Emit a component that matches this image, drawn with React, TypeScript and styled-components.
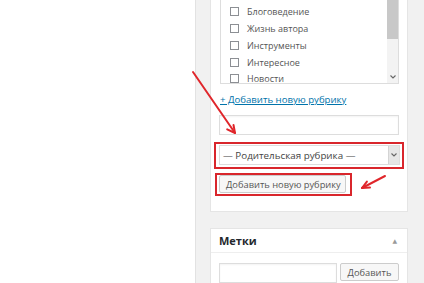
import styled, { createGlobalStyle } from 'styled-components';

const GlobalStyle = createGlobalStyle`
	html, body {
		margin: 0;
		padding: 0;
	}
	body {
		font-family: 'Open Sans', 'DejaVu Sans', sans-serif;
		color: #444;
	}
`;

const StyledPage = styled.div`
	position: relative;
	display: flex;
	width: 100vw;
	height: 100vh;
	overflow: hidden;
	background: #f1f1f1;
`;

const StyledEditor = styled.div`
	width: 195px;
	flex-shrink: 0;
	background: #fff;
	border-right: 1px solid #e2e2e2;
`;

const StyledSidebar = styled.div`
	flex: 1;
	display: flex;
	flex-direction: column;
	gap: 16px;
	padding: 0 17px 0 14px;
`;

const StyledPanel = styled.div<{ $cut?: boolean }>`
	background: #fff;
	border: 1px solid #e5e5e5;
	border-top-width: ${(p) => (p.$cut ? 0 : 1)}px;
`;

const StyledPanelBody = styled.div`
	display: flex;
	flex-direction: column;
	padding: 0 8px 15px 9px;
`;

const StyledListBox = styled.div`
	display: flex;
	height: 83px;
	border: 1px solid #ddd;
	border-top: 0;
	overflow: hidden;
`;

const StyledList = styled.ul`
	flex: 1;
	margin: 0;
	padding: 3.6px 0 0 9px;
	list-style: none;
`;

const StyledItem = styled.li`
	display: flex;
	align-items: center;
	gap: 8px;
	height: 16.75px;
	font-size: 9px;
	color: #555;
`;

const StyledCheck = styled.span`
	width: 7px;
	height: 7px;
	border: 1px solid #8c8f94;
	background: #fff;
`;

const StyledScrollbar = styled.div`
	width: 11px;
	display: flex;
	flex-direction: column;
	background: #f3f3f3;
`;

const StyledThumb = styled.div`
	height: 39px;
	background: #c8c8c8;
`;

const StyledScrollArrow = styled.div`
	margin-top: auto;
	height: 12px;
	display: flex;
	align-items: center;
	justify-content: center;
`;

const StyledLink = styled.a`
	margin-top: 9px;
	font-size: 9.6px;
	line-height: 14px;
	color: #0073aa;
	text-decoration: underline;
`;

const StyledInput = styled.div<{ $width?: number }>`
	height: 18px;
	width: ${(p) => (p.$width ? `${p.$width}px` : 'auto')};
	margin-left: -1px;
	border: 1px solid #ddd;
	background: #fff;
	box-shadow: inset 0 1px 2px rgba(0, 0, 0, 0.05);
`;

const StyledHighlight = styled.div<{ $inline?: boolean }>`
	display: flex;
	align-self: ${(p) => (p.$inline ? 'flex-start' : 'stretch')};
	border: 2px solid #d9262c;
`;

const StyledSelectWrap = styled(StyledHighlight)`
	margin: 7px -5px 0 -6px;
	padding: 1px 2px 2px 3px;
`;

const StyledButtonWrap = styled(StyledHighlight)`
	margin: 4px 0 0 -5px;
	padding: 0 4px 1px 2px;
`;

const StyledSelect = styled.div`
	flex: 1;
	height: 18px;
	display: flex;
	align-items: center;
	border: 1px solid #ddd;
	background: #fff;
	font-size: 9.8px;
	color: #444;
`;

const StyledSelectText = styled.span`
	flex: 1;
	padding-left: 3px;
`;

const StyledSelectArrow = styled.span`
	width: 10px;
	height: 100%;
	display: flex;
	align-items: center;
	justify-content: center;
	background: #e6e6e6;
	border-left: 1px solid #d4d4d4;
`;

const StyledButton = styled.button<{ $width?: number }>`
	height: 18px;
	width: ${(p) => (p.$width ? `${p.$width}px` : 'auto')};
	padding: 0 6px;
	border: 1px solid #ccc;
	border-radius: 2px;
	background: #f7f7f7;
	font-family: inherit;
	font-size: 9.3px;
	color: #555;
	white-space: nowrap;
`;

const StyledPanelHeader = styled.div`
	display: flex;
	align-items: center;
	justify-content: space-between;
	height: 23px;
	padding: 0 10px 0 8px;
	border-bottom: 1px solid #eee;
	font-size: 11px;
	font-weight: 700;
	color: #23282d;
`;

const StyledToggle = styled.span`
	font-size: 6px;
	color: #999;
`;

const StyledTagRow = styled.div`
	display: flex;
	gap: 3px;
	padding: 10px 8px 0 9px;
`;

const StyledArrows = styled.svg`
	position: absolute;
	left: 0;
	top: 0;
	pointer-events: none;
`;

const categories = ['Блоговедение', 'Жизнь автора', 'Инструменты', 'Интересное', 'Новости'];

function Chevron() {
	return (
		<svg width="6" height="4" viewBox="0 0 6 4">
			<path d="M0.5 0.5 L3 3 L5.5 0.5" fill="none" stroke="#666" strokeWidth="1.1" />
		</svg>
	);
}

export default function App() {
	return (
		<>
			<GlobalStyle />
			<StyledPage>
				<StyledEditor />
				<StyledSidebar>
					<StyledPanel $cut>
						<StyledPanelBody>
							<StyledListBox>
								<StyledList>
									{categories.map((c) => (
										<StyledItem key={c}>
											<StyledCheck />
											{c}
										</StyledItem>
									))}
								</StyledList>
								<StyledScrollbar>
									<StyledThumb />
									<StyledScrollArrow>
										<Chevron />
									</StyledScrollArrow>
								</StyledScrollbar>
							</StyledListBox>
							<StyledLink>+ Добавить новую рубрику</StyledLink>
							<StyledInput style={{ marginTop: 8 }} />
							<StyledSelectWrap>
								<StyledSelect>
									<StyledSelectText>— Родительская рубрика —</StyledSelectText>
									<StyledSelectArrow>
										<Chevron />
									</StyledSelectArrow>
								</StyledSelect>
							</StyledSelectWrap>
							<StyledButtonWrap $inline>
								<StyledButton $width={127}>Добавить новую рубрику</StyledButton>
							</StyledButtonWrap>
						</StyledPanelBody>
					</StyledPanel>
					<StyledPanel>
						<StyledPanelHeader>
							Метки
							<StyledToggle>▲</StyledToggle>
						</StyledPanelHeader>
						<StyledTagRow>
							<StyledInput $width={116} />
							<StyledButton $width={59}>Добавить</StyledButton>
						</StyledTagRow>
					</StyledPanel>
				</StyledSidebar>
				<StyledArrows width="424" height="283" viewBox="0 0 424 283">
					<g fill="none" stroke="#e0262b" strokeWidth="2" strokeLinecap="round" strokeLinejoin="round">
						<path d="M193 72 L235 133" />
						<path d="M233.5 125 L235 133 L227.2 129.4" />
						<path d="M385 176 L362 188" />
						<path d="M370 187.6 L362 188 L366.9 181.6" />
					</g>
				</StyledArrows>
			</StyledPage>
		</>
	);
}
